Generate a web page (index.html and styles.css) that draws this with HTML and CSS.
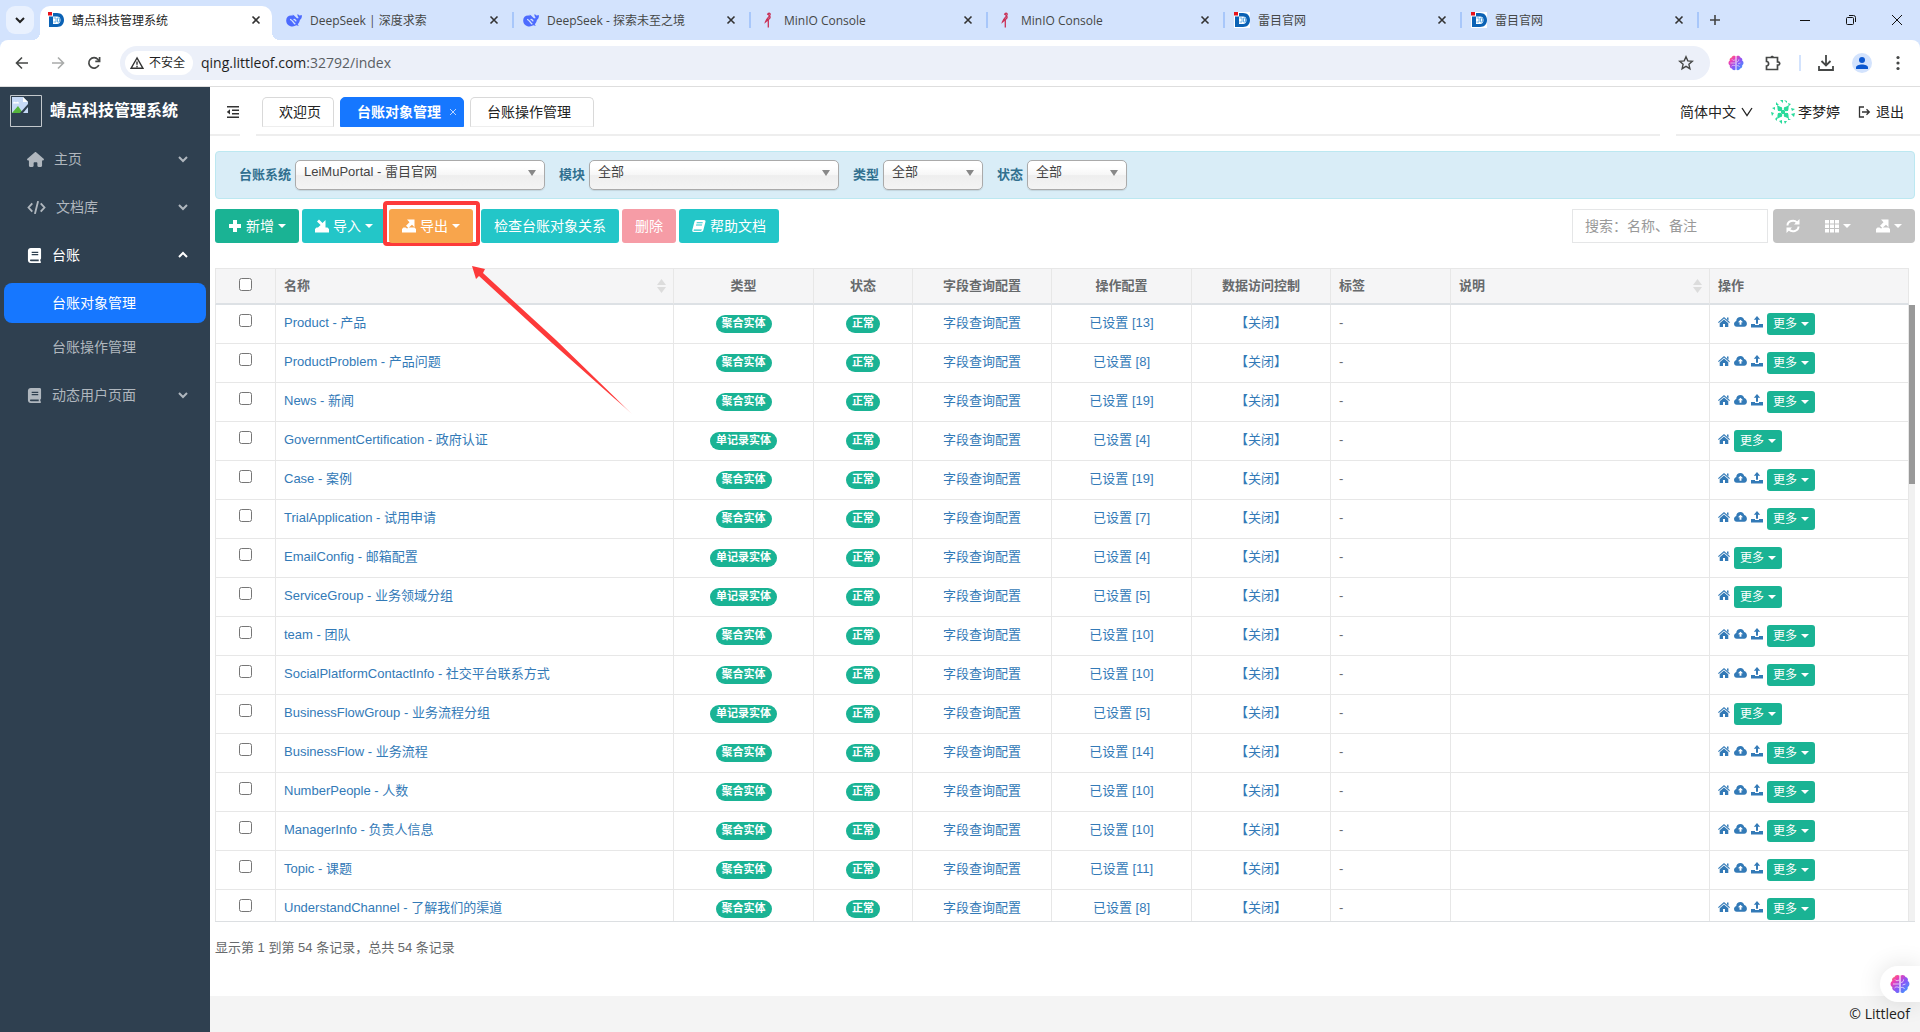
FILE: index.html
```html
<!DOCTYPE html>
<html lang="zh-CN">
<head>
<meta charset="utf-8">
<title>蜻点科技管理系统</title>
<link rel="stylesheet" href="styles.css">
</head>
<body>
<svg class="sprite" aria-hidden="true">
  <defs>
    <linearGradient id="brain-fill" x1="0" y1="0" x2="1" y2="1">
      <stop offset="0" stop-color="#ff9a2e"/><stop offset=".25" stop-color="#f23fb0"/><stop offset=".55" stop-color="#8a55f7"/><stop offset="1" stop-color="#2fa8ff"/>
    </linearGradient>
    <linearGradient id="arrow-fill" gradientUnits="userSpaceOnUse" x1="0" y1="0" x2="159" y2="147">
      <stop offset="0" stop-color="#fd3a3a"/><stop offset=".9" stop-color="#fd3a3a"/><stop offset="1" stop-color="#fd3a3a" stop-opacity=".3"/>
    </linearGradient>
  </defs>
  <symbol id="i-down" viewBox="0 0 10 10"><path d="M1 3l4 4 4-4" fill="none" stroke="currentColor" stroke-width="2"/></symbol>
  <symbol id="i-up" viewBox="0 0 10 10"><path d="M1 7l4-4 4 4" fill="none" stroke="currentColor" stroke-width="2"/></symbol>
  <symbol id="i-x" viewBox="0 0 10 10"><path d="M1.500 1.500l7 7m0-7l-7 7" fill="none" stroke="currentColor" stroke-width="1.600"/></symbol>
  <symbol id="i-d" viewBox="0 0 16 16"><path fill="#fff" d="M0 0h16v16H0z"/><path fill="#0b62b5" d="M5 1h4c4.500 0 7 2.800 7 7s-2.500 7-7 7H1V4.500h4V12h4c2.200 0 3.500-1.500 3.500-4S11.200 4.500 9 4.500H5z"/><path fill="#e8131b" d="M0 0h4v3.500H0z"/><path d="M5.500 6h2.500v4H5.500M9.500 6h2v4h-2z" fill="none" stroke="#6fb2e6"/></symbol>
  <symbol id="i-whale" viewBox="0 0 16 16"><path fill="#4d6bfe" d="M15.700 3.200c-.8-.4-1 .5-1.700.4-.9-.1-1.300-1-2.500-1.700.1 1.300-.4 2 .8 3.200.3.400 0 1-.2 1.500C10 6 8.800 3.300 6.500 2.400c.5.800.4 1 .1 1.200C3 2.800.3 4.800.2 8.200c-.1 3.500 2.600 6.200 6.300 6.200 1.500 0 2.800-.4 3.800-1.100.9.200 1.800.6 2.500.2-.4-.4-1-.8-1-1.300 1.200-1.200 1.800-2.600 2.100-4.300 1.300-.7 2.500-3.300 1.800-4.700z"/><path d="M4 7.300c2.200 0 3 3.400 5.300 4.800M7.500 7.600c1.500-.4 2.300.6 2.500 1.700" fill="none" stroke="#d3e3fd" stroke-width="1.300"/></symbol>
  <symbol id="i-minio" viewBox="0 0 16 16"><path d="M7.500 2.800C8 .8 10.300.8 10.200 2.500 10 4.500 6.500 6 5.500 10l4.300-3.800c1-1.300-.2-2.600-1.500-3.700M8.300 8v7.500" fill="none" stroke="#c93258" stroke-width="1.300"/></symbol>
  <symbol id="i-brain" viewBox="0 0 20 20"><path fill="url(#brain-fill)" d="M9.400 1.500C7.500.3 5 1 4.500 3 2.500 3.200 1.500 5.500 2.300 7 0 8.200 0 11.800 2.300 13c-.5 2 .8 3.600 2.600 3.900.8 2 3 2.600 4.500 1.400zM10.600 1.500c1.900-1.200 4.400-.5 4.900 1.500 2 .2 3 2.500 2.200 4 2.300 1.200 2.300 4.800 0 6 .5 2-.8 3.600-2.600 3.900-.8 2-3 2.600-4.500 1.400z"/><path d="M3 10h6M5 5.500c1 1.500 2.500 1.500 4 .5M4.500 14c1-1.300 3-1.300 4.500-.5M11 8.500c2-.2 2.700-1.500 2.500-3M12.500 11l3-1M11 13.500c1.500-.5 3 0 3.500 1.500" fill="none" stroke="#fff" stroke-opacity=".75" stroke-width=".9"/></symbol>
  <symbol id="i-house" viewBox="0 0 576 512"><path fill="currentColor" d="M575.800 255.500c0 18-15 32.100-32 32.100h-32l.7 160.200c0 2.700-.2 5.400-.5 8.100V472c0 22.100-17.900 40-40 40H392c-22.100 0-40-17.900-40-40v-88c0-17.700-14.300-32-32-32h-64c-17.700 0-32 14.300-32 32v88c0 22.100-17.900 40-40 40h-80c-22.100 0-40-17.900-40-40V287.600H32c-18 0-32-14-32-32.100 0-9 3-17 10-24L266.400 8c7-7 15-8 22-8s15 2 21 7l255.400 224.500c8 7 12 15 11 24z"/></symbol>
  <symbol id="i-code" viewBox="0 0 20 16"><path d="M5.500 3.500L1.500 8l4 4.500M14.500 3.500l4 4.500-4 4.500M11.700 1.200L8.300 14.800" fill="none" stroke="currentColor" stroke-width="2"/></symbol>
  <symbol id="i-book" viewBox="0 0 14 16"><path fill="currentColor" fill-rule="evenodd" d="M3 0h9.500C13.300 0 14 .7 14 1.500V11c0 .6-.3 1-.8 1.300V14c.5 0 .8.400.8 1s-.4 1-1 1H3c-1.700 0-3-1.300-3-3V3c0-1.700 1.300-3 3-3zM4 4v1.200h7V4zm0 2.500v1.200h7V6.500zM3 12.300c-1.200 0-1.200 1.700 0 1.700h8.500v-1.700z"/></symbol>
  <symbol id="i-plus" viewBox="0 0 14 14"><path fill="currentColor" d="M5 1h4v4h4v4H9v4H5V9H1V5h4z"/></symbol>
  <symbol id="i-import" viewBox="0 0 14 14"><path fill="currentColor" d="M0 13.500V10l1.500-1.500h11L14 10v3.500zM3 8.500L5.600 6 2 2.500 4 .5l3.500 3.600L10.500 1v7.500z"/></symbol>
  <symbol id="i-export" viewBox="0 0 14 14"><path fill="currentColor" d="M0 13.500V10l1.500-1.500h2L5 9.500 7 8.500h5.500L14 10v3.500zM5 .5h7.500v7.700L10 5.700 6.300 9 4 6.800l3.500-3.600z"/></symbol>
  <symbol id="i-notes" viewBox="0 0 14 14"><path fill="currentColor" fill-rule="evenodd" d="M4.500 1H12c1.200 0 1.800.8 1.500 1.800l-2.200 8.500c-.3 1-1.300 1.700-2.300 1.700H1.800C.6 13 0 12 .3 11L2.500 2.500C2.800 1.600 3.500 1 4.500 1zm.3 2.200l-.3 1h6l.3-1zm-.6 2.200l-.3 1h6l.3-1zM1.900 10.500l-.3 1.200h7.300c.5 0 .8-.5.9-1.200z"/></symbol>
  <symbol id="i-refresh" viewBox="0 0 14 14"><path d="M1.500 6.500C1.500 2 8 .2 11 3.500M12.500 7.500C12.500 12 6 13.800 3 10.500" fill="none" stroke="currentColor" stroke-width="2"/><path fill="currentColor" d="M13.500 0v5.500H8zM.5 14V8.500H6z"/></symbol>
  <symbol id="i-grid" viewBox="0 0 14 14"><path fill="currentColor" d="M0 1h4v3.500H0zm5 0h4v3.500H5zm5 0h4v3.500h-4zM0 5.500h4V9H0zm5 0h4V9H5zm5 0h4V9h-4zM0 10h4v3.500H0zm5 0h4v3.500H5zm5 0h4v3.500h-4z"/></symbol>
  <symbol id="i-home" viewBox="0 0 12 12"><path fill="currentColor" d="M6 1l6 5.200-.8.800L6 2.600.8 7 0 6.200 2 4.500zM9 1.500h1.500v3L9 3.200zM6 3.600l4.300 3.600V11H7V8H5v3H1.700V7.200z"/></symbol>
  <symbol id="i-cloud" viewBox="0 0 14 12"><path fill="currentColor" fill-rule="evenodd" d="M7 .5c2.300 0 3.700 1.500 4 3.300C15 5 14.700 11 11 11H3C-.7 11-1 5.800 2.500 4.800 2.300 2.300 4.300.5 7 .5zm0 3L4.300 6.400H6V9h2V6.400h1.700z"/></symbol>
  <symbol id="i-upload" viewBox="0 0 12 12"><path fill="currentColor" d="M6 0l3.200 3.700H7v4H5v-4H2.800zM0 8h4v1h4V8h4v3.500H0z"/></symbol>
</svg>

<div class="browser">
  <div class="tabstrip">
    <button class="tab-search" aria-label="搜索标签页"><svg width="10" height="10"><use href="#i-down"/></svg></button>
    <div class="btab active"><svg class="fav"><use href="#i-d"/></svg><span>蜻点科技管理系统</span><svg class="x"><use href="#i-x"/></svg></div>
    <div class="btab"><svg class="fav"><use href="#i-whale"/></svg><span>DeepSeek | 深度求索</span><svg class="x"><use href="#i-x"/></svg></div>
    <div class="btab"><svg class="fav"><use href="#i-whale"/></svg><span>DeepSeek - 探索未至之境</span><svg class="x"><use href="#i-x"/></svg></div>
    <div class="btab"><svg class="fav"><use href="#i-minio"/></svg><span>MinIO Console</span><svg class="x"><use href="#i-x"/></svg></div>
    <div class="btab"><svg class="fav"><use href="#i-minio"/></svg><span>MinIO Console</span><svg class="x"><use href="#i-x"/></svg></div>
    <div class="btab"><svg class="fav"><use href="#i-d"/></svg><span>雷目官网</span><svg class="x"><use href="#i-x"/></svg></div>
    <div class="btab"><svg class="fav"><use href="#i-d"/></svg><span>雷目官网</span><svg class="x"><use href="#i-x"/></svg></div>
    <button class="new-tab" aria-label="新标签页"><svg width="12" height="12"><path d="M6 1v10M1 6h10" stroke="#444" stroke-width="1.600"/></svg></button>
    <div class="win">
      <button aria-label="最小化"><svg width="12" height="12"><path d="M1 6.500h10" stroke="#111"/></svg></button>
      <button aria-label="还原"><svg width="12" height="12" fill="none" stroke="#111"><rect x="1.500" y="3.500" width="7" height="7" rx="1"/><path d="M4 1.500h4.500a2 2 0 0 1 2 2V8"/></svg></button>
      <button aria-label="关闭"><svg width="12" height="12"><path d="M1 1l10 10M11 1L1 11" stroke="#111"/></svg></button>
    </div>
  </div>
  <div class="navbar">
    <div class="nav-buttons">
      <button aria-label="后退"><svg width="16" height="16" fill="none" stroke="#454746" stroke-width="1.600"><path d="M14 8H3M8 2.500L2.500 8 8 13.500"/></svg></button>
      <button aria-label="前进"><svg width="16" height="16" fill="none" stroke="#a9abaa" stroke-width="1.600"><path d="M2 8h11M8 2.500L13.500 8 8 13.500"/></svg></button>
      <button aria-label="刷新"><svg width="16" height="16" fill="none" stroke="#454746" stroke-width="1.700"><path d="M12.800 10A5.200 5.200 0 1 1 12 4.500l1.500 1.500M13.600 2v4.300H9.300"/></svg></button>
    </div>
    <div class="omnibox">
      <span class="chip"><svg width="14" height="14" fill="none" stroke="#333" stroke-width="1.400"><path d="M7 2L1 12.300h12zM7 5.500v3.300M7 9.800v1.400"/></svg>不安全</span>
      <span class="url">qing.littleof.com<em>:32792/index</em></span>
      <svg class="star" width="16" height="16" fill="none" stroke="#454746" stroke-width="1.400"><path d="M8 1.800l1.800 4.100 4.500.4-3.400 3 1 4.400L8 11.400l-3.900 2.300 1-4.400-3.400-3 4.500-.4z"/></svg>
    </div>
    <div class="nav-tools">
      <svg width="16" height="16"><use href="#i-brain"/></svg>
      <svg width="18" height="16" fill="none" stroke="#454746" stroke-width="1.700"><path d="M2.500 2.500h11v4.300c3 0 3 3.400 0 3.400v4.300h-11v-3.500c2.800 0 2.800-4.500 0-4.500z"/><path d="M6.500 2.500c0-2.500 3.400-2.500 3.400 0z" fill="#454746" stroke="none"/></svg>
      <i class="bar"></i>
      <svg width="16" height="16" fill="none" stroke="#454746" stroke-width="1.800"><path d="M8 0v10M3.500 6L8 10.500 12.500 6M1 11v4h14v-4"/></svg>
      <svg class="me" width="20" height="20"><circle cx="10" cy="10" r="10" fill="#d3e3fd"/><circle cx="10" cy="7" r="3" fill="#0b57d0"/><path d="M4 16v-1.500c0-4 12-4 12 0V16z" fill="#0b57d0"/></svg>
      <svg width="16" height="16" fill="#454746"><circle cx="8" cy="2.500" r="1.600"/><circle cx="8" cy="8" r="1.600"/><circle cx="8" cy="13.500" r="1.600"/></svg>
    </div>
  </div>
</div>

<div class="app">
  <nav class="sidebar">
    <div class="brand">
      <svg width="32" height="32"><path d="M.5.5h31v31H.5z" fill="none" stroke="#c3c8cc"/><path d="M2 2h11l5 5v11H2z" fill="#c6d9f6"/><path d="M2 18l6-7 5 7z" fill="#55b53c"/><path d="M3 8.500c0-2 2-2 3-1 1-1.500 3-1 3 1z" fill="#fff"/><path d="M13 2l5 5h-5z" fill="#fff"/><path d="M18 9l-8 9h3l5-6z" fill="#2f4050"/></svg>
      <strong>蜻点科技管理系统</strong>
    </div>
    <a class="item" href="#"><svg width="17" height="15"><use href="#i-house"/></svg><span>主页</span><svg class="chev"><use href="#i-down"/></svg></a>
    <a class="item" href="#"><svg width="19" height="15"><use href="#i-code"/></svg><span>文档库</span><svg class="chev"><use href="#i-down"/></svg></a>
    <a class="item open" href="#"><svg width="15" height="15"><use href="#i-book"/></svg><span>台账</span><svg class="chev"><use href="#i-up"/></svg></a>
    <div class="sub">
      <a class="item on" href="#">台账对象管理</a>
      <a class="item" href="#">台账操作管理</a>
    </div>
    <a class="item" href="#"><svg width="15" height="15"><use href="#i-book"/></svg><span>动态用户页面</span><svg class="chev"><use href="#i-down"/></svg></a>
  </nav>

  <div class="main">
    <header class="topbar">
      <button class="fold" aria-label="折叠菜单"><svg width="14" height="14" fill="#333"><path d="M1 1h12v1.400H1zM6 4.500h7v1.400H6zM6 8h7v1.400H6zM1 11.500h12v1.400H1zM4 4.300v5.200L.8 6.900z"/></svg></button>
      <div class="pages">
        <button class="page">欢迎页</button>
        <button class="page on">台账对象管理<svg width="8" height="8"><path d="M1 1l6 6M7 1L1 7" stroke="#b9d5ff"/></svg></button>
        <button class="page">台账操作管理</button>
      </div>
      <div class="account">
        <a class="lang" href="#">简体中文<svg width="12" height="12"><path d="M1 2l5 7.500L11 2" fill="none" stroke="#222" stroke-width="1.300"/></svg></a>
        <a class="user" href="#"><svg width="24" height="24" fill="#2adb9c"><path d="M9 0h3v3zM13 0l3 1v2zM5 2l3 3H5zM17 3l3 1-2 2zM1 8l3-1v3zM20 8l4 1-3 2zM0 12l3 1-2 3zM20 14l4-1-1 4zM4 19l2-2v4zM17 18l3 2h-3zM8 21l3-1v4zM13 21l3 0-2 3z"/><path d="M6 5l3 2h6l3-2-1 4v6l1 4-3-2H9l-3 2 1-4V9z" fill="none"/><path d="M6 5l5 3v3H7zM18 5l-5 3v3h4zM6 19l5-3v-3H7zM18 19l-5-3v-3h4zM10 10h4v4h-4z"/><circle cx="9" cy="9" r="2.300"/><circle cx="15" cy="9" r="2.300"/><circle cx="9" cy="15" r="2.300"/><circle cx="15" cy="15" r="2.300"/></svg>李梦婷</a>
        <a class="exit" href="#"><svg width="13" height="12" fill="none" stroke="#333" stroke-width="1.300"><path d="M6 1H1.500v10H6M4 6h7M8.500 3.300L11.300 6 8.500 8.700"/></svg>退出</a>
      </div>
    </header>

    <form class="filters">
      <label for="sys">台账系统</label>
      <span class="pick wide"><select id="sys"><option>LeiMuPortal - 雷目官网</option></select></span>
      <label for="mod">模块</label>
      <span class="pick wide"><select id="mod"><option>全部</option></select></span>
      <label for="kind">类型</label>
      <span class="pick"><select id="kind"><option>全部</option></select></span>
      <label for="state">状态</label>
      <span class="pick"><select id="state"><option>全部</option></select></span>
    </form>

    <div class="toolbar">
      <div class="group">
        <button class="btn green"><svg><use href="#i-plus"/></svg>新增<i class="caret"></i></button>
        <button class="btn teal"><svg><use href="#i-import"/></svg>导入<i class="caret"></i></button>
        <div class="marked">
          <button class="btn orange"><svg><use href="#i-export"/></svg>导出<i class="caret"></i></button>
          <svg class="arrow" width="162" height="150"><path fill="url(#arrow-fill)" d="M0 0l13 3-2 4 73 67 76 74-80-71L7 10l-3 3z"/></svg>
        </div>
      </div>
      <div class="group">
        <button class="btn teal">检查台账对象关系</button>
        <button class="btn pink">删除</button>
        <button class="btn teal"><svg><use href="#i-notes"/></svg>帮助文档</button>
      </div>
      <input class="search" type="text" aria-label="搜索" placeholder="搜索：名称、备注">
      <div class="tools">
        <button class="btn" aria-label="刷新"><svg><use href="#i-refresh"/></svg></button>
        <button class="btn" aria-label="列"><svg><use href="#i-grid"/></svg><i class="caret"></i></button>
        <button class="btn" aria-label="导出数据"><svg><use href="#i-export"/></svg><i class="caret"></i></button>
      </div>
    </div>

    <div class="grid">
      <table class="head">
        <colgroup><col class="c-check"><col class="c-name"><col class="c-140"><col class="c-99"><col class="c-139"><col class="c-140"><col class="c-139"><col class="c-tag"><col><col class="c-act"></colgroup>
        <thead><tr>
          <th class="mid"><input type="checkbox" aria-label="全选"></th><th class="sort">名称</th><th class="mid">类型</th><th class="mid">状态</th><th class="mid">字段查询配置</th><th class="mid">操作配置</th><th class="mid">数据访问控制</th><th>标签</th><th class="sort">说明</th><th>操作</th>
        </tr></thead>
      </table>
      <div class="view">
        <div class="clip">
          <table>
            <colgroup><col class="c-check"><col class="c-name"><col class="c-140"><col class="c-99"><col class="c-139"><col class="c-140"><col class="c-139"><col class="c-tag"><col><col class="c-act"></colgroup>
            <tbody id="rows"></tbody>
          </table>
        </div>
        <div class="scroll"><div class="thumb"></div></div>
      </div>
    </div>
    <p class="info">显示第 1 到第 54 条记录，总共 54 条记录</p>
    <footer>© Littleof</footer>
    <button class="assistant" aria-label="助手"><svg width="20" height="20"><use href="#i-brain"/></svg></button>
  </div>
</div>
<script src="rows.js"></script>
</body>
</html>
```
FILE: styles.css
```css
* { box-sizing: border-box; }
body { margin: 0; height: 100vh; display: flex; flex-direction: column; overflow: hidden; background: #fff; font: 13px/18px "Liberation Sans", "Noto Sans CJK SC", sans-serif; color: #676a6c; }
button { font: inherit; color: inherit; border: 0; background: none; padding: 0; }
a { color: inherit; text-decoration: none; }
svg { flex: none; display: block; }
.sprite { position: absolute; width: 0; height: 0; }

/* browser chrome */
.browser { font: 12px/18px "Open Sans", "Noto Sans CJK SC", sans-serif; color: #454746; background: #d3e3fd; }
.tabstrip { display: flex; align-items: flex-end; height: 40px; padding-left: 6px; }
.tab-search { width: 28px; height: 28px; margin: 0 6px 6px 0; border-radius: 9px; background: #e9f1fe; display: grid; place-items: center; color: #222; }
.btab { flex: 0 1 237px; height: 34px; display: flex; align-items: center; gap: 8px; padding: 0 15px 6px 9px; position: relative; }
.btab span { flex: 1; white-space: nowrap; overflow: hidden; line-height: 28px; padding-top: 1px; }
.btab.active { flex-basis: 232px; margin-right: 5px; padding: 0 11px 6px 8px; background: #fff; border-radius: 10px 10px 0 0; color: #1f1f1f; }
.btab.active::before, .btab.active::after { content: ""; position: absolute; bottom: 0; width: 8px; height: 8px; }
.btab.active::before { left: -8px; background: radial-gradient(circle at 0 0, transparent 8px, #fff 8px); }
.btab.active::after { right: -8px; background: radial-gradient(circle at 100% 0, transparent 8px, #fff 8px); }
.btab:not(.active)::after { content: ""; position: absolute; right: 0; top: 6px; width: 2px; height: 16px; background: #a8c7fa; }
.fav { width: 16px; height: 16px; }
.x { width: 10px; height: 10px; color: #333; }
.new-tab { width: 28px; height: 28px; margin: 0 0 6px 2px; display: grid; place-items: center; }
.win { margin-left: auto; display: flex; align-self: flex-start; }
.win button { width: 46px; height: 40px; display: grid; place-items: center; }
.navbar { display: flex; align-items: center; height: 47px; padding: 0 14px; background: #fff; border-radius: 8px 8px 0 0; border-bottom: 1px solid #dedede; }
.nav-buttons { display: flex; gap: 20px; width: 106px; }
.omnibox { flex: 1; display: flex; align-items: center; height: 34px; padding: 0 16px 0 5px; border-radius: 17px; background: #ecf0f9; }
.chip { display: flex; align-items: center; gap: 5px; height: 24px; padding: 0 8px 0 5px; border-radius: 12px; background: #fff; color: #1f1f1f; }
.url { margin-left: 8px; font-size: 14px; color: #1f1f1f; }
.url em { font-style: normal; color: #5a5e63; }
.star { margin-left: auto; }
.nav-tools { display: flex; align-items: center; gap: 20px; padding-left: 18px; }
.nav-tools .bar { width: 2px; height: 16px; background: #d3e3fd; margin: 0 -3px; }
.nav-tools .me { margin: 0 -2px; }

/* sidebar */
.app { flex: 1; display: flex; min-height: 0; }
.sidebar { width: 210px; flex: none; background: #2f4050; color: #b0b7be; font-size: 14px; }
.brand { display: flex; align-items: center; gap: 8px; height: 48px; padding: 0 10px; margin-bottom: 4px; color: #fff; font-size: 16px; }
.item { display: flex; align-items: center; gap: 10px; height: 40px; margin: 0 4px 8px; padding: 0 18px 0 23px; border-radius: 8px; }
.item .chev { width: 10px; height: 10px; margin-left: auto; }
.item.open { color: #fff; }
.sub .item { margin-bottom: 4px; padding-left: 48px; }
.sub .item:last-child { margin-bottom: 8px; }
.sub .on { background: #1677ff; color: #fff; }

/* top bar */
.main { flex: 1; min-width: 0; display: flex; flex-direction: column; position: relative; }
.topbar { display: flex; height: 49px; flex: none; font-size: 14px; color: #222; }
.topbar > * { border-bottom: 2px solid #eee; }
.fold { width: 30px; padding: 2px 0 0 16px; }
.pages { flex: 1; display: flex; gap: 6px; padding: 10px 6px 0; margin: 0 16px; }
.page { display: flex; align-items: center; height: 30px; padding: 0 12px 0 16px; border: 1px solid #d9d9d9; border-bottom-color: #eee; border-radius: 5px 5px 0 0; background: #fff; }
.page:last-child { padding-right: 22px; }
.page.on { gap: 8px; padding: 0 6px 0 16px; border-color: #1677ff; background: #1677ff; color: #fff; font-weight: bold; }
.account { display: flex; align-items: center; padding: 2px 16px 0 4px; gap: 18px; }
.account a { display: flex; align-items: center; gap: 5px; }
.account .user { gap: 3px; }

/* filters */
.filters { display: flex; align-items: center; height: 48px; flex: none; margin: 15px 5px 10px; padding: 0 23px; background: #d9edf7; border: 1px solid #bce8f1; border-radius: 4px; color: #31708f; }
.filters label { font-weight: bold; margin-right: 4px; }
.pick { position: relative; width: 100px; margin-right: 14px; }
.pick.wide { width: 250px; }
.pick::after { content: ""; position: absolute; right: 9px; top: 10px; border: 4px solid transparent; border-top: 6px solid #888; border-bottom: 0; }
.pick select { display: block; width: 100%; height: 30px; padding: 0 20px 6px 8px; appearance: none; font: inherit; color: #444; border: 1px solid #aaa; border-radius: 5px; background: linear-gradient(#fff 20%, #f6f6f6 50%, #eee 52%, #f4f4f4); box-shadow: 0 1px 1px rgba(0, 0, 0, .1); }

/* toolbar */
.toolbar { display: flex; flex: none; margin: 0 5px 25px; }
.group { display: flex; gap: 3px; margin-right: 8px; }
.btn { display: flex; align-items: center; gap: 4px; height: 34px; padding: 0 13px; border-radius: 3px; color: #fff; font-size: 14px; }
.btn svg { width: 14px; height: 14px; }
.caret { border: 4px solid transparent; border-top-color: currentColor; border-bottom: 0; }
.green { background: #1ab394; }
.teal { background: #23c6c8; }
.orange { background: #f8a54c; }
.pink { background: #f69ca6; }
.marked { position: relative; }
.marked::before { content: ""; position: absolute; inset: -8px -7px -3px -6px; border: 4px solid #fd3a3a; border-radius: 4px; background: #fff; }
.marked .btn { position: relative; }
.arrow { position: absolute; left: 83px; top: 57px; z-index: 2; pointer-events: none; }
.search { width: 196px; height: 34px; margin-left: auto; padding: 0 12px; border: 1px solid #e5e6e7; font: inherit; font-size: 14px; color: #676a6c; }
.search::placeholder { color: #999; }
.tools { display: flex; margin-left: 5px; padding-right: 1px; border-radius: 4px; background: #c2c2c2; }
.tools .btn { padding: 0 12px 0 13px; }

/* data grid */
.grid { flex: 1; min-height: 0; display: flex; flex-direction: column; margin: 0 5px; border-bottom: 1px solid #dcdfe2; }
table { width: 100%; table-layout: fixed; border-collapse: separate; border-spacing: 0; }
.head { width: calc(100% - 6px); }
.c-check { width: 61px; }
.c-name { width: 398px; }
.c-140 { width: 140px; }
.c-99 { width: 99px; }
.c-139 { width: 139px; }
.c-tag { width: 120px; }
.c-act { width: 199px; }
th, td { padding: 8px; border: solid #e7e7e7; border-width: 0 1px 1px 0; vertical-align: top; text-align: left; font-weight: normal; white-space: nowrap; }
th:first-child, td:first-child { border-left-width: 1px; }
th { height: 37px; background: #f5f5f6; border-top-width: 1px; border-bottom: 2px solid #dde1e5; font-weight: bold; }
td { height: 39px; line-height: 20px; }
.mid { text-align: center; }
td a { color: #337ab7; }
td input, th input { display: block; width: 13px; height: 13px; margin: 1px auto 0; }
.sort { background: #f5f5f6 url("data:image/svg+xml,%3Csvg xmlns='http://www.w3.org/2000/svg' width='9' height='14'%3E%3Cpath d='M0 6l4.500-6L9 6zM0 8h9l-4.500 6z' fill='%23dcdcdc'/%3E%3C/svg%3E") no-repeat right 7px center; }
.view { flex: 1; min-height: 0; display: flex; }
.clip { flex: 1; overflow: hidden; }
.scroll { width: 6px; background: #f1f1f1; }
.thumb { height: 29%; background: #999; }
.badge { display: block; width: max-content; height: 18px; margin: 2px auto 0; padding: 0 6px; border-radius: 9px; background: #1ab394; color: #fff; font-size: 11px; line-height: 17px; font-weight: bold; }
.acts { display: flex; gap: 4px; }
.acts a { height: 18px; display: flex; align-items: center; }
.more { display: flex; align-items: center; gap: 4px; height: 22px; padding: 0 6px; border-radius: 3px; background: #1ab394; color: #fff; font-size: 12px; }
.info { margin: 17px 5px 39px; }
footer { height: 36px; flex: none; padding: 0 10px; background: #f4f4f4; color: #222; text-align: right; font: 14px/36px "Open Sans", sans-serif; }
.assistant { position: absolute; right: 0; bottom: 30px; width: 40px; height: 36px; padding-left: 10px; border-radius: 18px 0 0 18px; background: #fff; box-shadow: 0 0 24px rgba(0, 0, 0, .12); }
```
FILE: rows.js
```js
const rows = [
  ["Product - 产品", 0, 13],
  ["ProductProblem - 产品问题", 0, 8],
  ["News - 新闻", 0, 19],
  ["GovernmentCertification - 政府认证", 1, 4],
  ["Case - 案例", 0, 19],
  ["TrialApplication - 试用申请", 0, 7],
  ["EmailConfig - 邮箱配置", 1, 4],
  ["ServiceGroup - 业务领域分组", 1, 5],
  ["team - 团队", 0, 10],
  ["SocialPlatformContactInfo - 社交平台联系方式", 0, 10],
  ["BusinessFlowGroup - 业务流程分组", 1, 5],
  ["BusinessFlow - 业务流程", 0, 14],
  ["NumberPeople - 人数", 0, 10],
  ["ManagerInfo - 负责人信息", 0, 10],
  ["Topic - 课题", 0, 11],
  ["UnderstandChannel - 了解我们的渠道", 0, 8]
];
const icon = (id, w, label) => `<a href="#" aria-label="${label}"><svg width="${w}" height="12"><use href="#${id}"/></svg></a>`;
document.getElementById("rows").innerHTML = rows.map(([name, single, n]) => `<tr>
  <td><input type="checkbox" aria-label="${name}"></td>
  <td><a href="#">${name}</a></td>
  <td><span class="badge">${single ? "单记录实体" : "聚合实体"}</span></td>
  <td><span class="badge">正常</span></td>
  <td class="mid"><a href="#">字段查询配置</a></td>
  <td class="mid"><a href="#">已设置 [${n}]</a></td>
  <td class="mid"><a href="#">【关闭】</a></td>
  <td>-</td><td></td>
  <td><div class="acts">${icon("i-home", 12, "主页")}${single ? "" : icon("i-cloud", 13, "云上传") + icon("i-upload", 12, "上传")}<button class="more">更多<i class="caret"></i></button></div></td>
</tr>`).join("");
```
